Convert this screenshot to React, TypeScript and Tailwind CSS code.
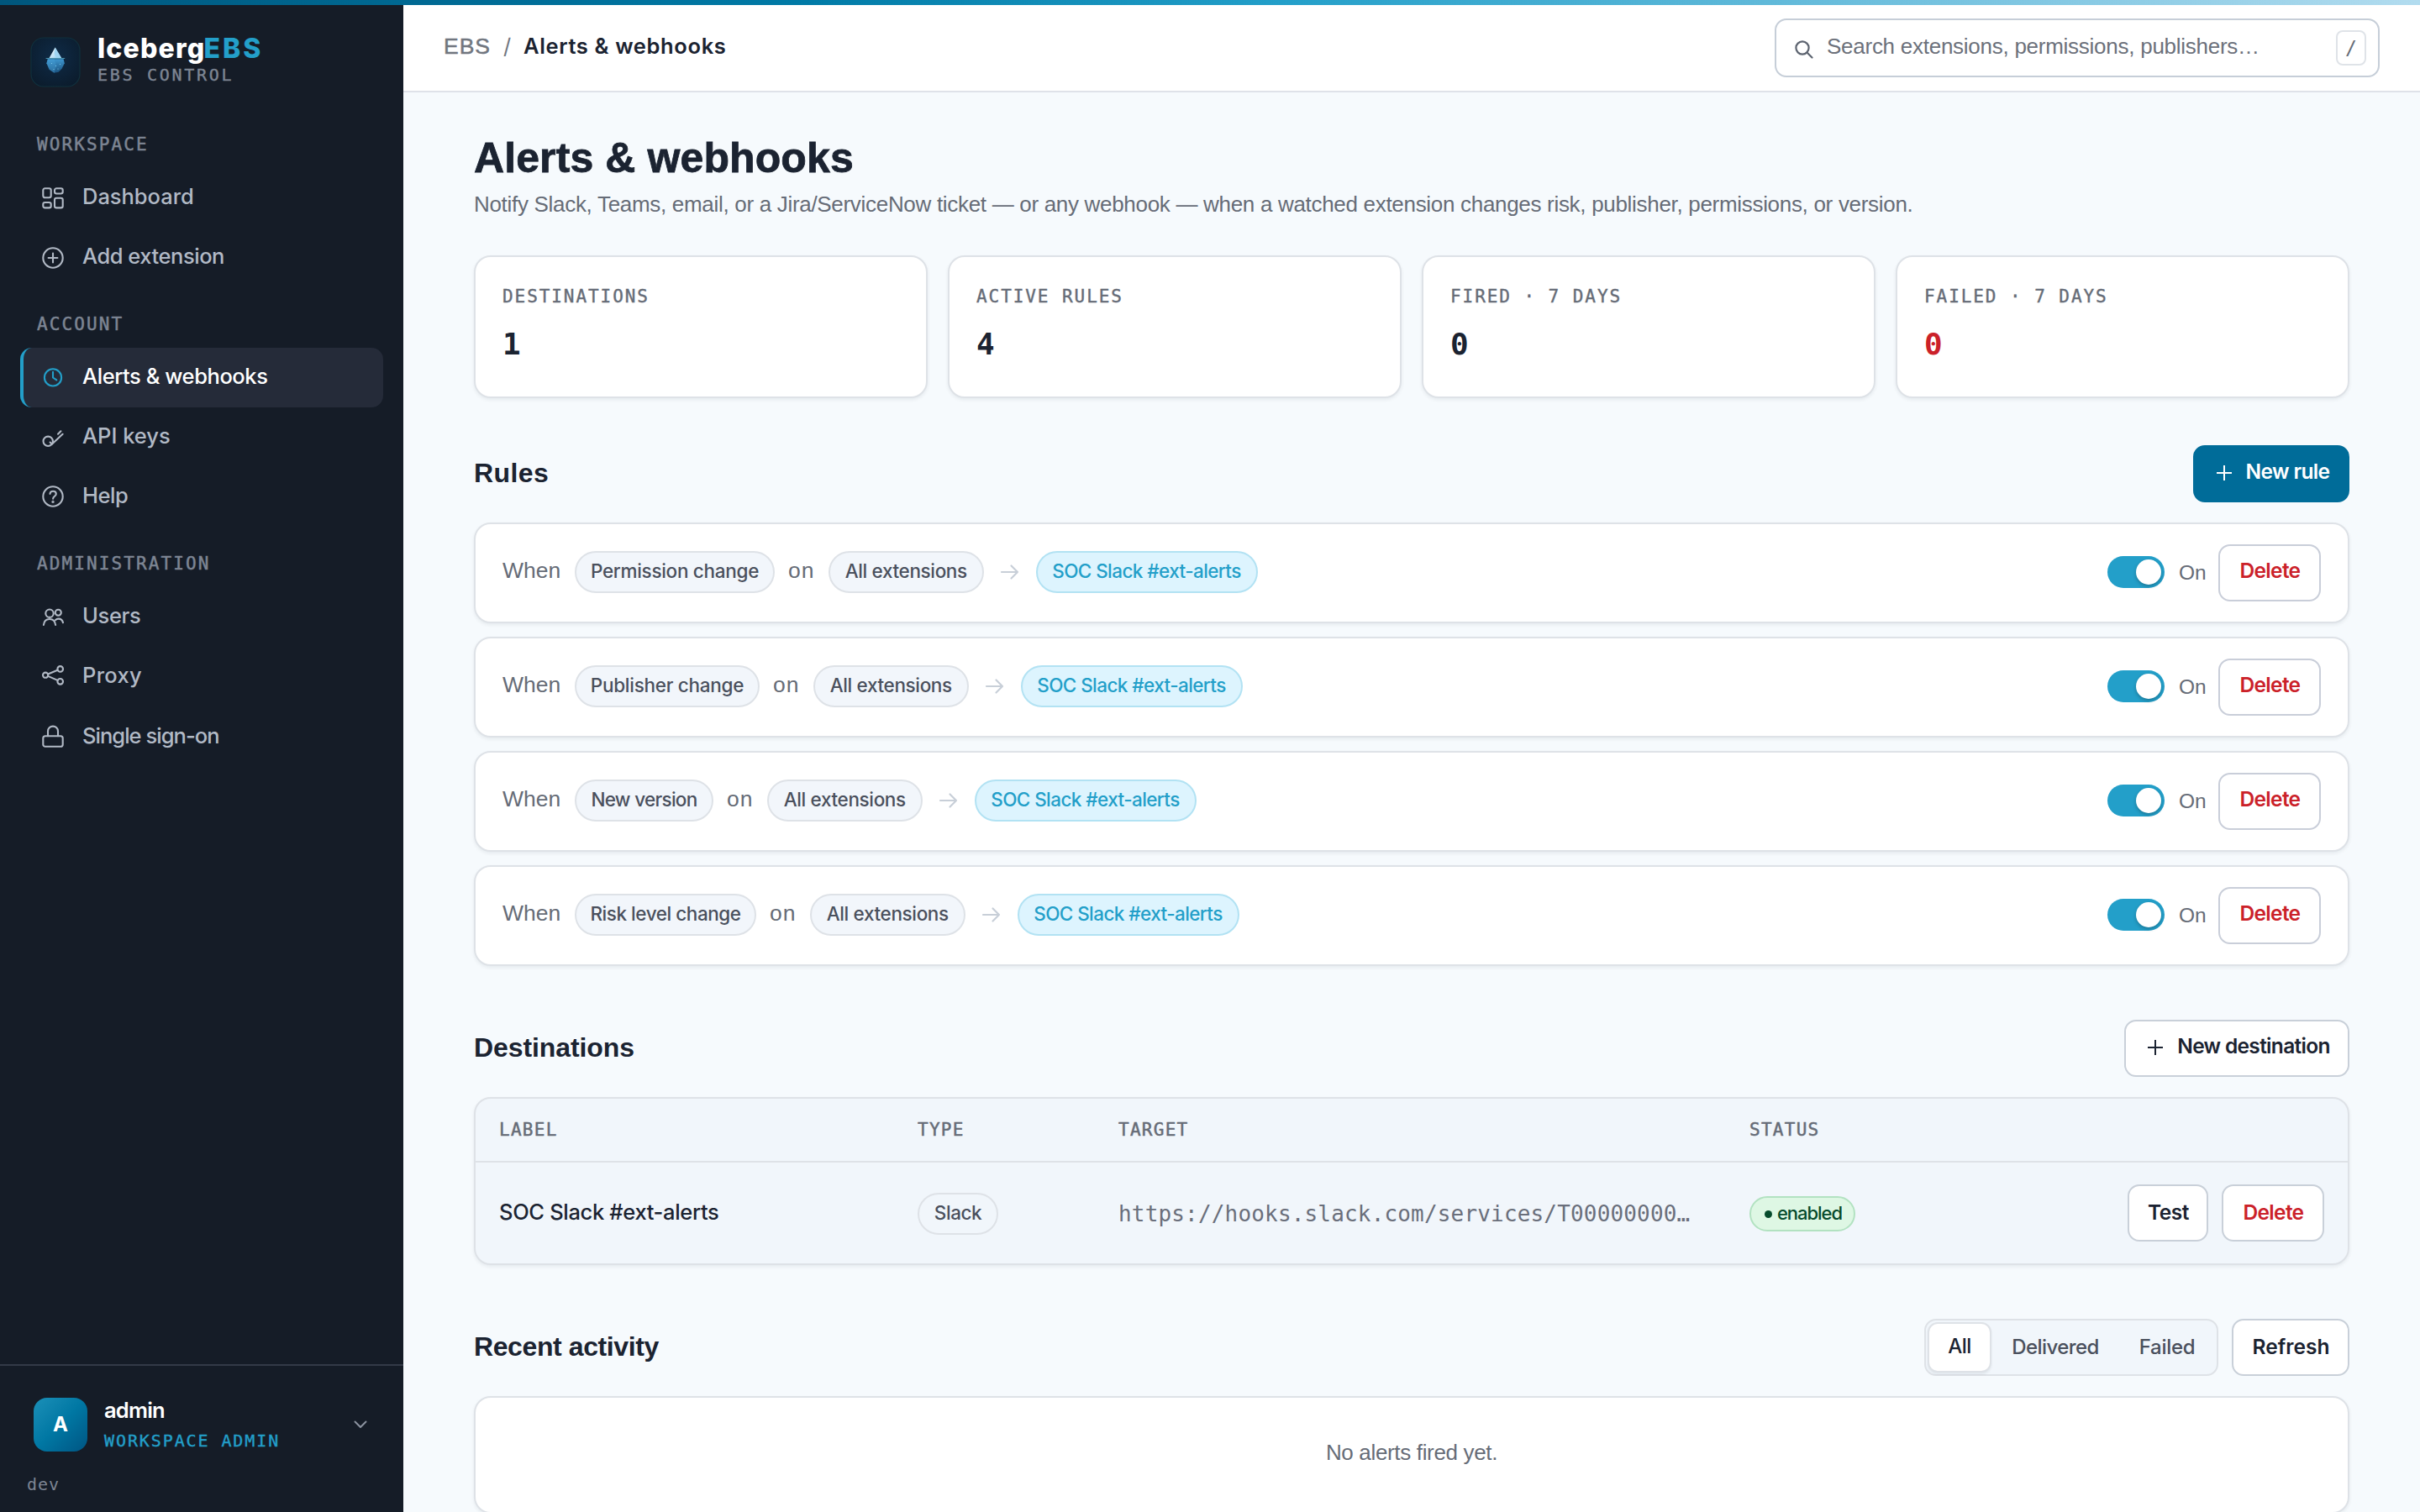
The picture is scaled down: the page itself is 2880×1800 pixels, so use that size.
import type { ReactNode } from 'react';

type NavEntry = { label: string; icon: ReactNode; tracking: string; active?: boolean };

const INTER = "font-['Inter',sans-serif]";
const ARIAL = "font-['Liberation_Sans',sans-serif]";
const MONO = "font-['DejaVu_Sans_Mono',monospace]";

function Icon({ children }: { children: ReactNode }) {
  return (
    <svg
      viewBox="0 0 26 26"
      className="size-[26px] shrink-0 overflow-visible"
      fill="none"
      stroke="currentColor"
      strokeWidth="2.1"
      strokeLinecap="round"
      strokeLinejoin="round"
    >
      {children}
    </svg>
  );
}

const workspace: NavEntry[] = [
  {
    label: 'Dashboard',
    tracking: 'tracking-[-0.001em]',
    icon: (
      <Icon>
        <rect x="1.3" y="1.3" width="9.4" height="11" rx="2.2" />
        <rect x="15" y="1.3" width="9.7" height="6.2" rx="2.2" />
        <rect x="1.3" y="18" width="9.4" height="6.4" rx="2.2" />
        <rect x="15" y="12.7" width="9.7" height="11.7" rx="2.2" />
      </Icon>
    ),
  },
  {
    label: 'Add extension',
    tracking: 'tracking-[-0.018em]',
    icon: (
      <Icon>
        <circle cx="13" cy="13" r="11.7" />
        <path d="M13 7.6v10.8M7.6 13h10.8" />
      </Icon>
    ),
  },
];

const account: NavEntry[] = [
  {
    label: 'Alerts & webhooks',
    tracking: 'tracking-[-0.017em]',
    active: true,
    icon: (
      <Icon>
        <circle cx="13" cy="12.4" r="10.1" />
        <path d="M13 5.9v6.6l4.3 2.9" />
      </Icon>
    ),
  },
  {
    label: 'API keys',
    tracking: 'tracking-[0em]',
    icon: (
      <Icon>
        <circle cx="7.2" cy="17.3" r="5.7" />
        <path d="M9.6 18.6l2.2 2.2L24.6 8.8M19 8.7l3.4-3.4" />
      </Icon>
    ),
  },
  {
    label: 'Help',
    tracking: 'tracking-[-0.018em]',
    icon: (
      <Icon>
        <circle cx="13" cy="12" r="11.7" />
        <path d="M9.5 8.9c.2-2 1.7-3.2 3.6-3.2 2.1 0 3.700 1.300 3.700 3.200 0 2.700-3.700 3-3.700 5.800" />
        <circle cx="13" cy="18.4" r="0.6" />
      </Icon>
    ),
  },
];

const administration: NavEntry[] = [
  {
    label: 'Users',
    tracking: 'tracking-[-0.014em]',
    icon: (
      <Icon>
        <circle cx="9" cy="8.2" r="4.7" />
        <circle cx="19.3" cy="7.3" r="3.5" />
        <path d="M1.9 22c.5-4.600 3.300-7 7.100-7s6.600 2.400 7.100 7" />
        <path d="M15.900 16.200c1.100-1.100 2.300-1.600 3.600-1.600 3 0 5 1.800 5.500 4.700" />
      </Icon>
    ),
  },
  {
    label: 'Proxy',
    tracking: 'tracking-[0.012em]',
    icon: (
      <Icon>
        <circle cx="4.1" cy="10.7" r="3.1" />
        <circle cx="21.7" cy="3.4" r="3.3" />
        <circle cx="21.7" cy="18.3" r="3.3" />
        <path d="M7.100 9.500l11.400-4.700M7.100 11.900l11.400 5" />
      </Icon>
    ),
  },
  {
    label: 'Single sign-on',
    tracking: 'tracking-[-0.038em]',
    icon: (
      <Icon>
        <rect x="1.3" y="11.2" width="23.4" height="12.6" rx="2.6" />
        <path d="M7 11.200V5.600a6 6 0 0 1 12 0v5.600" />
      </Icon>
    ),
  },
];

function NavGroup({ title, items }: { title: string; items: NavEntry[] }) {
  return (
    <div>
      <div
        className={`${MONO} flex h-[71.33px] items-start pt-[27px] pl-[20px] text-[21px] leading-[32px] tracking-[2.1px] text-[#7d8593] [-webkit-text-stroke:0.5px]`}
      >
        {title}
      </div>
      {items.map((item) => (
        <div
          key={item.label}
          className={`flex h-[71.33px] items-center gap-[22px] rounded-[14px] border-l-4 pl-[22px] ${
            item.active
              ? 'border-[#239fc9] bg-[#252b39] text-[#239fc9]'
              : 'border-transparent text-[#b1b9c5]'
          }`}
        >
          {item.icon}
          <span
            className={`${INTER} pb-[4px] text-[25.5px] leading-[36px] font-medium whitespace-nowrap ${item.tracking} ${
              item.active ? 'text-white' : 'text-[#b1b9c5]'
            }`}
          >
            {item.label}
          </span>
        </div>
      ))}
    </div>
  );
}

function Logo() {
  return (
    <svg viewBox="0 0 60 60" className="mt-[5px] size-[60px] shrink-0">
      <defs>
        <radialGradient id="tile" cx="0.5" cy="0.4" r="0.7">
          <stop offset="0" stopColor="#0f2b47" />
          <stop offset="1" stopColor="#0b1b2b" />
        </radialGradient>
        <linearGradient id="tip" x1="0" y1="0" x2="1" y2="1">
          <stop offset="0" stopColor="#ffffff" />
          <stop offset="1" stopColor="#8fcdf0" />
        </linearGradient>
        <linearGradient id="deep" x1="0" y1="0" x2="0" y2="1">
          <stop offset="0" stopColor="#3e97d0" />
          <stop offset="1" stopColor="#1a527f" />
        </linearGradient>
      </defs>
      <rect x="1" y="1" width="58" height="58" rx="15" fill="url(#tile)" stroke="#10303d" strokeWidth="1.2" />
      <path d="M29.6 12.6L37.4 25.4H22.300z" fill="url(#tip)" />
      <path d="M29.6 12.6L37.4 25.4H30.800l-2.200-6z" fill="#9ed4f2" />
      <path d="M20.800 26.200h18.800l1.200 5-3.200 6.600-4 4-5.200.9-5.800-3.900-3.200-7.600z" fill="url(#deep)" />
      <path d="M28.500 26.200l2.500 8-2.500 8.500-5.800-3.900-3.200-7.600 1.300-5z" fill="#4aa3d9" fillOpacity="0.35" />
      <path d="M18.600 25.500h22.600" stroke="#4d93ad" strokeWidth="1" />
      <g fill="#7fd0f0">
        <circle cx="25.5" cy="31.5" r="0.6" />
        <circle cx="30.5" cy="34.5" r="0.6" />
        <circle cx="35.5" cy="32.5" r="0.6" />
        <circle cx="33" cy="38" r="0.6" />
        <circle cx="28" cy="38.5" r="0.6" />
      </g>
    </svg>
  );
}

function Sidebar() {
  return (
    <aside className="flex w-[480px] shrink-0 flex-col bg-[#151c27]">
      <div className="flex h-[128.67px] items-start gap-[20px] pt-[39px] pl-[36px]">
        <Logo />
        <div>
          <div className={`${INTER} pt-[1px] text-[32px] leading-[36px] font-extrabold whitespace-nowrap text-white`}>
            <span className="-mr-[2px] tracking-[1.2px]">Iceberg</span>
            <span className="tracking-[3px] text-[#239fc9]">EBS</span>
          </div>
          <div className={`${MONO} mt-[1px] text-[20px] leading-[24px] tracking-[2.7px] text-[#7d8593] [-webkit-text-stroke:0.4px]`}>
            EBS CONTROL
          </div>
        </div>
      </div>
      <nav className="flex-1 px-[24px]">
        <NavGroup title="WORKSPACE" items={workspace} />
        <NavGroup title="ACCOUNT" items={account} />
        <NavGroup title="ADMINISTRATION" items={administration} />
      </nav>
      <div className="h-[176px] border-t-2 border-[#333a47] pt-[38px]">
        <div className="flex h-[64px] items-center pr-[44px] pl-[40px]">
          <div
            className={`${INTER} flex size-[64px] items-center justify-center rounded-[16px] bg-linear-135 from-[#1a90b8] via-[#0077a3] to-[#005583] text-[24px] font-bold text-white`}
          >
            A
          </div>
          <div className="ml-[20px] flex-1">
            <div className={`${INTER} -mt-[2px] text-[25.5px] leading-[36px] font-semibold tracking-[-0.031em] text-white`}>
              admin
            </div>
            <div className={`${MONO} mt-[2px] -mb-[2px] text-[20px] leading-[32px] tracking-[1.9px] text-[#239fc9] [-webkit-text-stroke:0.4px]`}>
              WORKSPACE ADMIN
            </div>
          </div>
          <svg viewBox="0 0 14 8" className="h-[8px] w-[14px] overflow-visible" fill="none" stroke="#8b93a0" strokeWidth="2">
            <path d="M0.5 0.5L7 7l6.500-6.500" strokeLinecap="round" strokeLinejoin="round" />
          </svg>
        </div>
        <div className={`${MONO} mt-[23px] pl-[32px] text-[20px] leading-[32px] tracking-[1px] text-[#7d8593]`}>dev</div>
      </div>
    </aside>
  );
}

function Header() {
  return (
    <header className="flex h-[110px] shrink-0 items-center border-b-2 border-[#dfe2e9] bg-white pt-[6px] pr-[48px] pl-[48px]">
      <div className={`${INTER} flex items-center pb-[4px] text-[25.5px] leading-[36px] whitespace-nowrap`}>
        <span className={`${ARIAL} w-[71px] text-[26.5px] tracking-[1px] text-[#71767f] [-webkit-text-stroke:0.5px]`}>EBS</span>
        <span className="w-[24px] text-[#71767f]">/</span>
        <span className="font-semibold tracking-[0.025em] text-[#1b2331]">Alerts &amp; webhooks</span>
      </div>
      <div className="ml-auto flex h-[70px] w-[720px] items-center rounded-[14px] border-2 border-[#c6ced8] bg-white pr-[14px] pl-[22px]">
        <svg viewBox="0 0 22 22" className="mt-[3px] size-[22px]" fill="none" stroke="#5d6470" strokeWidth="2.2">
          <circle cx="9" cy="9" r="7.6" />
          <path d="M14.500 14.500l6 6" strokeLinecap="round" />
        </svg>
        <span className={`${ARIAL} ml-[16px] flex-1 pb-[4px] text-[26px] leading-[36px] tracking-[-0.010em] whitespace-nowrap text-[#6c717b]`}>
          Search extensions, permissions, publishers…
        </span>
        <span
          className={`${MONO} flex h-[42px] w-[36px] items-center justify-center rounded-[8px] border-2 border-[#dfe3e8] text-[23px] text-[#666c77]`}
        >
          /
        </span>
      </div>
    </header>
  );
}

const stats = [
  { label: 'DESTINATIONS', value: '1', color: 'text-[#1b2331]' },
  { label: 'ACTIVE RULES', value: '4', color: 'text-[#1b2331]' },
  { label: 'FIRED · 7 DAYS', value: '0', color: 'text-[#1b2331]' },
  { label: 'FAILED · 7 DAYS', value: '0', color: 'text-[#cb2129]' },
];

const rules = [
  { event: 'Permission change', chip: 'w-[238px] tracking-[-0.013em]' },
  { event: 'Publisher change', chip: 'w-[220px] tracking-[-0.012em]' },
  { event: 'New version', chip: 'w-[165px] tracking-[-0.031em]' },
  { event: 'Risk level change', chip: 'w-[216px] tracking-[-0.020em]' },
];

const card = 'rounded-[20px] border-2 border-[#dee2e7] shadow-[0_2px_4px_rgba(16,24,40,0.07)]';

function Chip({ className, children }: { className: string; children: ReactNode }) {
  return (
    <span
      className={`${INTER} flex h-[50px] shrink-0 items-center justify-center rounded-full border-2 pb-[2px] text-[22.5px] leading-[30px] font-medium whitespace-nowrap ${className}`}
    >
      {children}
    </span>
  );
}

function Button({ className, children }: { className: string; children: ReactNode }) {
  return (
    <button
      className={`${INTER} flex h-[68px] shrink-0 items-center justify-center rounded-[14px] border-2 pl-[1px] text-[24.5px] leading-[36px] font-semibold whitespace-nowrap ${className}`}
    >
      {children}
    </button>
  );
}

function Plus() {
  return (
    <svg viewBox="0 0 20 20" className="mt-[4px] size-[20px]" fill="none" stroke="currentColor" strokeWidth="2">
      <path d="M10 1v18M1 10h18" />
    </svg>
  );
}

function SectionHead({ title, tracking, children }: { title: string; tracking: string; children: ReactNode }) {
  return (
    <div className="flex h-[68px] items-center justify-between">
      <h2 className={`${ARIAL} pb-[2px] text-[32px] leading-[40px] font-bold text-[#1b2331] ${tracking}`}>{title}</h2>
      {children}
    </div>
  );
}

function RuleRow({ event, chip }: { event: string; chip: string }) {
  return (
    <div className={`${card} flex h-[120px] items-center justify-between bg-white px-[32px]`}>
      <div className={`${ARIAL} flex items-center gap-[16px] pb-[2px] text-[26.5px] leading-[36px] text-[#666c77]`}>
        <span className="w-[70px] pb-[5px]">When</span>
        <Chip className={`border-[#dee2e7] bg-[#f2f6fb] text-[#4a505d] ${chip}`}>{event}</Chip>
        <span className="w-[32px] pb-[5px] tracking-[1px]">on</span>
        <Chip className="w-[184.5px] border-[#dee2e7] bg-[#f2f6fb] tracking-[-0.016em] text-[#4a505d]">All extensions</Chip>
        <svg viewBox="0 0 30 30" className="size-[30px]" fill="none" stroke="#c8cfd8" strokeWidth="2.2" strokeLinecap="round" strokeLinejoin="round">
          <path d="M5 15h19M16.500 7.500l7.500 7.500-7.500 7.500" />
        </svg>
        <Chip className="w-[264px] border-[#b2e2f3] bg-[#ddf4fe] tracking-[-0.026em] text-[#239fc9]">SOC Slack #ext-alerts</Chip>
      </div>
      <div className="flex items-center gap-[16px]">
        <div className="mb-[2px] flex h-[38px] w-[68px] items-center justify-end rounded-full bg-[#239fc9] p-[4px]">
          <div className="size-[30px] rounded-full bg-white shadow-[0_2px_4px_rgba(0,0,0,0.25)]" />
        </div>
        <span className={`${ARIAL} w-[32px] pl-[1px] text-[24.5px] leading-[34px] text-[#666c77]`}>On</span>
        <Button className="w-[122px] border-[#c9ced9] bg-white pb-[6px] tracking-[-0.028em] text-[#cb2129]">Delete</Button>
      </div>
    </div>
  );
}

export default function App() {
  return (
    <div className="relative flex h-[1800px] w-[2880px] overflow-hidden bg-[#f6fafd]">
      <div className="absolute inset-x-0 top-0 z-10 h-[6px] bg-[linear-gradient(90deg,#00567d_0%,#007aa6_33%,#239fc9_53%,#b2dcef_100%)]" />
      <Sidebar />
      <div className="flex min-w-0 flex-1 flex-col">
        <Header />
        <main className="px-[84px] pt-[48px]">
          <h1
            className={`${ARIAL} text-[50px] leading-[60px] font-bold tracking-[0.1px] text-[#1b2331] [-webkit-text-stroke:0.8px]`}
          >
            Alerts &amp; webhooks
          </h1>
          <p className={`${ARIAL} mt-[5px] text-[26px] leading-[40px] tracking-[-0.0118em] whitespace-nowrap text-[#666c77]`}>
            Notify Slack, Teams, email, or a Jira/ServiceNow ticket — or any webhook — when a watched extension changes risk,
            publisher, permissions, or version.
          </p>

          <div className="mt-[41px] grid grid-cols-4 gap-[24px]">
            {stats.map((s) => (
              <div key={s.label} className={`${card} h-[170px] bg-white px-[32px] pt-[31px] ${MONO}`}>
                <div className="text-[21px] leading-[32px] tracking-[1.93px] text-[#666c77] [-webkit-text-stroke:0.4px]">{s.label}</div>
                <div className={`mt-[17px] text-[36px] leading-[48px] font-bold ${s.color}`}>{s.value}</div>
              </div>
            ))}
          </div>

          <section className="mt-[56px]">
            <SectionHead title="Rules" tracking="tracking-[0.4px]">
              <Button className="w-[186px] gap-[16px] border-[#006c99] bg-[#006c99] pb-[6px] pl-[3px] tracking-[-0.027em] text-white">
                <Plus />
                New rule
              </Button>
            </SectionHead>
            <div className="mt-[24px] flex flex-col gap-[16px]">
              {rules.map((r) => (
                <RuleRow key={r.event} {...r} />
              ))}
            </div>
          </section>

          <section className="mt-[64px]">
            <SectionHead title="Destinations" tracking="tracking-[-0.1px]">
              <Button className="w-[268px] gap-[16px] border-[#c9d0d9] bg-white pb-[6px] pl-[4px] tracking-[-0.028em] text-[#1b2331]">
                <Plus />
                New destination
              </Button>
            </SectionHead>
            <div className={`${card} mt-[24px] bg-[#f1f6fb]`}>
              <div
                className={`${MONO} grid h-[76px] grid-cols-[498px_239px_751px_1fr] items-center border-b-2 border-[#dee2e7] px-[28px] text-[21px] leading-[32px] tracking-[1.27px] text-[#666c77] [-webkit-text-stroke:0.5px]`}
              >
                <span>LABEL</span>
                <span>TYPE</span>
                <span>TARGET</span>
                <span>STATUS</span>
              </div>
              <div className="grid h-[120px] grid-cols-[498px_239px_751px_1fr_auto] items-center px-[28px]">
                <span className={`${INTER} pb-[3px] text-[25.5px] leading-[36px] font-medium tracking-[-0.013em] text-[#1b2331]`}>
                  SOC Slack #ext-alerts
                </span>
                <div className="flex pt-[2px]">
                  <Chip className="w-[96px] border-[#dee2e7] tracking-[-0.020em] text-[#4a505d]">Slack</Chip>
                </div>
                <span className={`${MONO} pt-[2px] text-[26px] leading-[36px] tracking-[0.17px] text-[#6a6f7b]`}>
                  https://hooks.slack.com/services/T00000000…
                </span>
                <div className="pt-[2px]">
                  <span
                    className={`${INTER} flex h-[42px] w-[126px] items-center gap-[6px] rounded-full border-2 border-[#b2e2c1] bg-[#def7e4] pb-[2px] pl-[16px] text-[22px] leading-[28px] font-medium tracking-[-0.048em] text-[#064b2c]`}
                  >
                    <i className="mt-[3px] size-[9px] rounded-full bg-[#064b2c]" />
                    enabled
                  </span>
                </div>
                <div className="flex gap-[16px]">
                  <Button className="w-[96px] border-[#c9d0d9] bg-white pb-[2px] tracking-[-0.020em] text-[#1b2331]">Test</Button>
                  <Button className="w-[122px] border-[#c9d0d9] bg-white pb-[2px] tracking-[-0.028em] text-[#cb2129]">Delete</Button>
                </div>
              </div>
            </div>
          </section>

          <section className="mt-[64px]">
            <SectionHead title="Recent activity" tracking="tracking-[-0.4px]">
              <div className="flex gap-[16px]">
                <div
                  className={`${INTER} flex h-[68px] w-[350px] rounded-[14px] border-2 border-[#dee2e7] bg-[#f1f6fb] p-[2px] text-[24px] leading-[36px] font-medium text-[#4a505d]`}
                >
                  <span className="flex w-[76px] items-center justify-center rounded-[12px] border-2 border-[#dee2e7] bg-white pb-[2px] tracking-[-0.020em] text-[#1b2331] shadow-[0_2px_3px_rgba(16,24,40,0.07)]">
                    All
                  </span>
                  <span className="flex w-[152px] items-center justify-center pb-[1px] tracking-[-0.025em]">Delivered</span>
                  <span className="flex w-[114px] items-center justify-center pb-[1px] tracking-[-0.012em]">Failed</span>
                </div>
                <Button className="w-[140px] border-[#c9d0d9] bg-white pb-[2px] text-[#1b2331]">Refresh</Button>
              </div>
            </SectionHead>
            <div
              className={`${card} ${ARIAL} mt-[24px] flex h-[140px] items-center justify-center bg-white pb-[6px] text-[26px] leading-[36px] tracking-[-0.013em] text-[#666c77]`}
            >
              No alerts fired yet.
            </div>
          </section>
        </main>
      </div>
    </div>
  );
}
